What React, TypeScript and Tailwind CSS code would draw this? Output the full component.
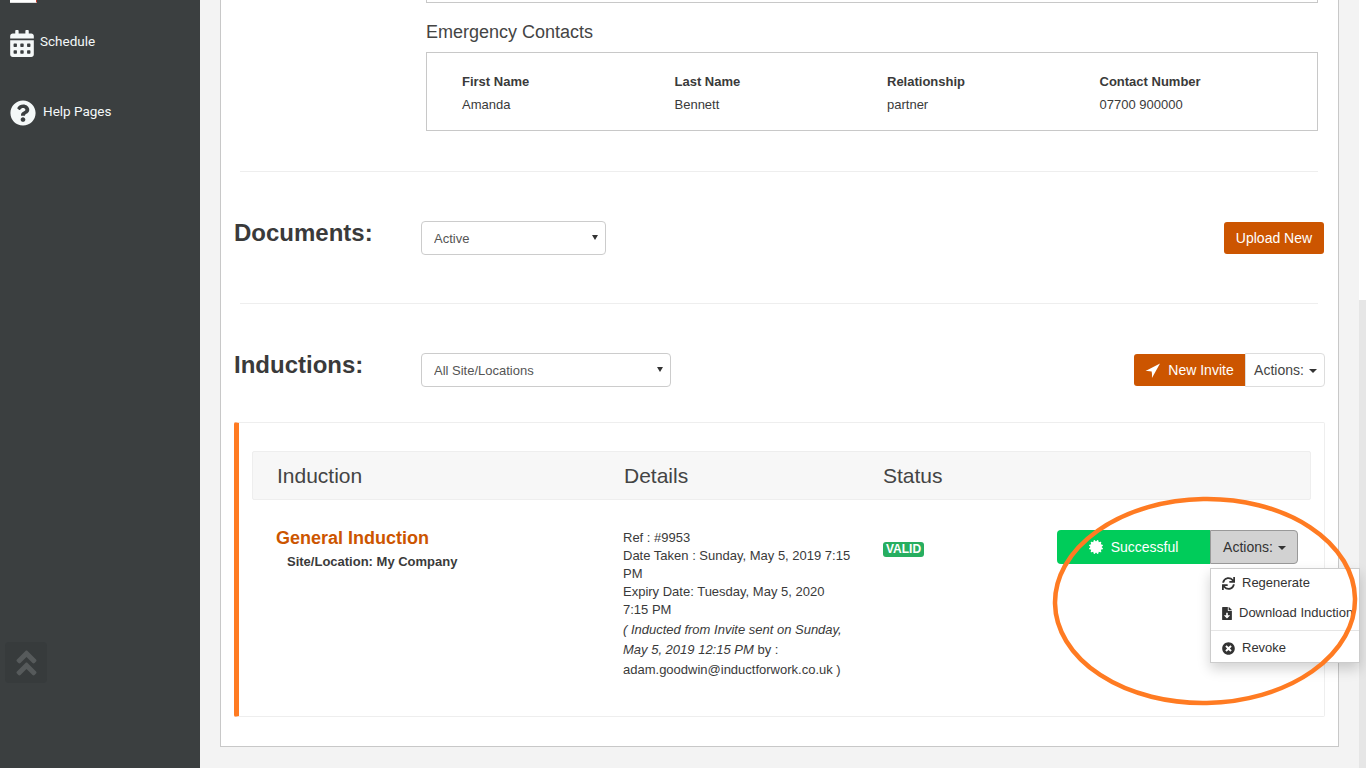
import React from "react";
import { FaCalendarAlt, FaQuestionCircle, FaAngleDoubleUp, FaSync, FaFileDownload, FaTimesCircle, FaCertificate } from "react-icons/fa";

const Caret = () => (
  <span className="ml-[5px] inline-block w-0 h-0 border-x-[4px] border-x-transparent border-t-[4px] border-t-[#333] align-middle" />
);

const Select = ({ label, w }: { label: string; w: string }) => (
  <div className={`relative ${w} h-[34px] shrink-0`}>
    <select
      defaultValue={label}
      className="appearance-none w-full h-full bg-white border border-[#ccc] rounded-[4px] pl-[12px] pt-[2px] text-[13px] text-[#555]"
    >
      <option>{label}</option>
    </select>
    <span className="absolute right-[8px] top-[14px] w-0 h-0 border-x-[3px] border-x-transparent border-t-[5px] border-t-[#333] pointer-events-none" />
  </div>
);

const Hr = () => <div className="h-px ml-[19px] w-[1078px] bg-[#eeeeee]" />;

export default function App() {
  return (
    <div className="relative flex h-[768px] w-[1366px] overflow-hidden bg-[#f3f3f3] text-[#3a3a3a] font-['Liberation_Sans',Arial,sans-serif]">
      <aside className="w-[200px] shrink-0 bg-[#3b3f40] flex flex-col font-['Roboto',sans-serif] text-[13.5px] text-[#f4f8f8]">
        <div className="ml-[10px] w-[27px] h-[3px] bg-white border-r border-b border-r-[#c0392b] border-b-[#ddd]" />
        <div className="mt-[26px] ml-[10px] flex items-start h-[30px]">
          <FaCalendarAlt className="w-[24px] h-[27px] mt-[1px]" />
          <span className="ml-[6px] leading-[24px]">Schedule</span>
        </div>
        <div className="mt-[41px] ml-[10px] flex items-start h-[30px]">
          <FaQuestionCircle className="w-[26px] h-[26px]" />
          <span className="ml-[7px] leading-[24px] -mt-px">Help Pages</span>
        </div>
        <div className="mt-[512px] ml-[5px] w-[42px] h-[41px] rounded-[4px] bg-[#373b3c] flex items-center justify-center">
          <FaAngleDoubleUp className="w-[27px] h-[32px] text-[#565a5b]" />
        </div>
      </aside>

      <main className="flex-1 min-w-0">
        <div className="ml-[20px] w-[1119px] h-[747px] bg-white border-x border-b border-[#c8c8c8] text-[13px]">
          <div className="ml-[205px] w-[892px] h-[3px] border-x border-b border-[#c8c8c8]" />
          <h3 className="ml-[205px] mt-[19px] text-[18px] leading-[20px] text-[#444]">Emergency Contacts</h3>
          <div className="ml-[205px] mt-[10px] w-[892px] h-[79px] border border-[#c8c8c8] pl-[35px] pt-[20px]">
            <div className="grid grid-cols-4 w-[850px] leading-[18px]">
              <b>First Name</b><b>Last Name</b><b>Relationship</b><b>Contact Number</b>
            </div>
            <div className="grid grid-cols-4 w-[850px] leading-[18px] mt-[5px]">
              <span>Amanda</span><span>Bennett</span><span>partner</span><span>07700 900000</span>
            </div>
          </div>
          <div className="mt-[40px]"><Hr /></div>

          <div className="mt-[49px] pl-[13px] pr-[14px] flex items-start h-[34px]">
            <h2 className="w-[187px] font-bold text-[24px] leading-[24px]">Documents:</h2>
            <Select label="Active" w="w-[185px]" />
            <button className="ml-auto mt-px h-[32px] w-[100px] rounded-[3px] bg-[#cc5500] text-white text-[14px]">Upload New</button>
          </div>
          <div className="mt-[48px]"><Hr /></div>

          <div className="mt-[49px] pl-[13px] pr-[13px] flex items-start h-[34px]">
            <h2 className="w-[187px] font-bold text-[24px] leading-[24px]">Inductions:</h2>
            <Select label="All Site/Locations" w="w-[250px]" />
            <div className="ml-auto flex items-center">
              <button className="h-[32px] w-[111px] rounded-l-[3px] bg-[#cc5500] text-white text-[14px] flex items-center justify-center">
                <svg className="w-[15px] h-[15px] mr-[8px] shrink-0" viewBox="0 0 14 14" fill="currentColor"><path d="M14 0.5 L0.5 7.5 Q4 7.2 6.2 8 Q6.8 10.5 6.5 14 Z" /></svg>
                New Invite
              </button>
              <button className="h-[34px] w-[80px] pl-px rounded-r-[4px] border border-[#ddd] bg-white text-[14px] text-[#444]">Actions:<Caret /></button>
            </div>
          </div>

          <div className="mt-[35px] ml-[13px] w-[1091px] h-[295px] border border-[#eeeeee] border-l-[5px] border-l-[#ff7b22] rounded-[2px] pl-[13px] pt-[28px]">
            <div className="w-[1059px] h-[49px] bg-[#f7f7f7] border border-[#eeeeee] rounded-[2px] flex items-center text-[21px] text-[#444]">
              <span className="ml-[24px] w-[347px]">Induction</span>
              <span className="w-[259px]">Details</span>
              <span>Status</span>
            </div>
            <div className="flex items-start">
              <div className="ml-[24px] w-[347px] pt-[26px]">
                <div className="text-[18px] leading-[24px] font-bold text-[#cc5500]">General Induction</div>
                <div className="ml-[11px] text-[13px] leading-[24px] font-bold">Site/Location: My Company</div>
              </div>
              <div className="w-[260px] pt-[29px] text-[13px] leading-[18px] pr-[24px]">
                <div>Ref : #9953</div>
                <div>Date Taken : Sunday, May 5, 2019 7:15 PM</div>
                <div>Expiry Date: Tuesday, May 5, 2020<br />7:15 PM</div>
                <div className="leading-[20px] mt-px"><i>( Inducted from Invite sent on Sunday, May 5, 2019 12:15 PM</i> by : adam.goodwin@inductforwork.co.uk )</div>
              </div>
              <div className="w-[174px] pt-[39px]">
                <span className="inline-block h-[15px] w-[41px] text-center rounded-[3px] bg-[#27ae60] text-white text-[12px] font-bold leading-[15px]">VALID</span>
              </div>
              <div className="mt-[30px] flex items-start relative">
                <button className="h-[34px] w-[153px] rounded-l-[4px] bg-[#00cc5a] text-white text-[14px] flex items-center justify-center">
                  <FaCertificate className="w-[14px] h-[14px] mr-[8px] shrink-0" />Successful
                </button>
                <button className="h-[34px] w-[88px] pl-px rounded-r-[4px] border border-[#999] bg-[#d2d2d2] text-[14px] text-[#333]">Actions:<Caret /></button>
                <div className="absolute left-[153px] top-[38px] w-[150px] h-[95px] bg-white border border-[#ccc] shadow-[0_6px_12px_rgba(0,0,0,0.175)] text-[13px] text-[#333] z-10">
                  <div className="h-[30px] -mt-[1px] pl-[11px] flex items-center"><FaSync className="w-[13px] h-[13px] mr-[7px] shrink-0" />Regenerate</div>
                  <div className="h-[30px] pl-[11px] flex items-center whitespace-nowrap overflow-hidden"><FaFileDownload className="w-[10px] h-[13px] mr-[7px] shrink-0" />Download Induction</div>
                  <div className="h-px bg-[#e5e5e5] mt-[2px]" />
                  <div className="h-[30px] mt-[2px] pl-[11px] flex items-center"><FaTimesCircle className="w-[13px] h-[13px] mr-[7px] shrink-0" />Revoke</div>
                </div>
              </div>
            </div>
          </div>
        </div>
      </main>

      <div className="w-[7px] shrink-0 flex flex-col">
        <div className="h-[300px] bg-white" />
        <div className="flex-1 bg-[#e6e6e6]" />
      </div>

      <svg className="absolute left-0 top-0 pointer-events-none z-20" width="1366" height="768" fill="none">
        <ellipse cx="1205" cy="601" rx="150" ry="102" stroke="#ff7b22" strokeWidth="4.5" transform="rotate(-1 1205 601)" />
      </svg>
    </div>
  );
}
